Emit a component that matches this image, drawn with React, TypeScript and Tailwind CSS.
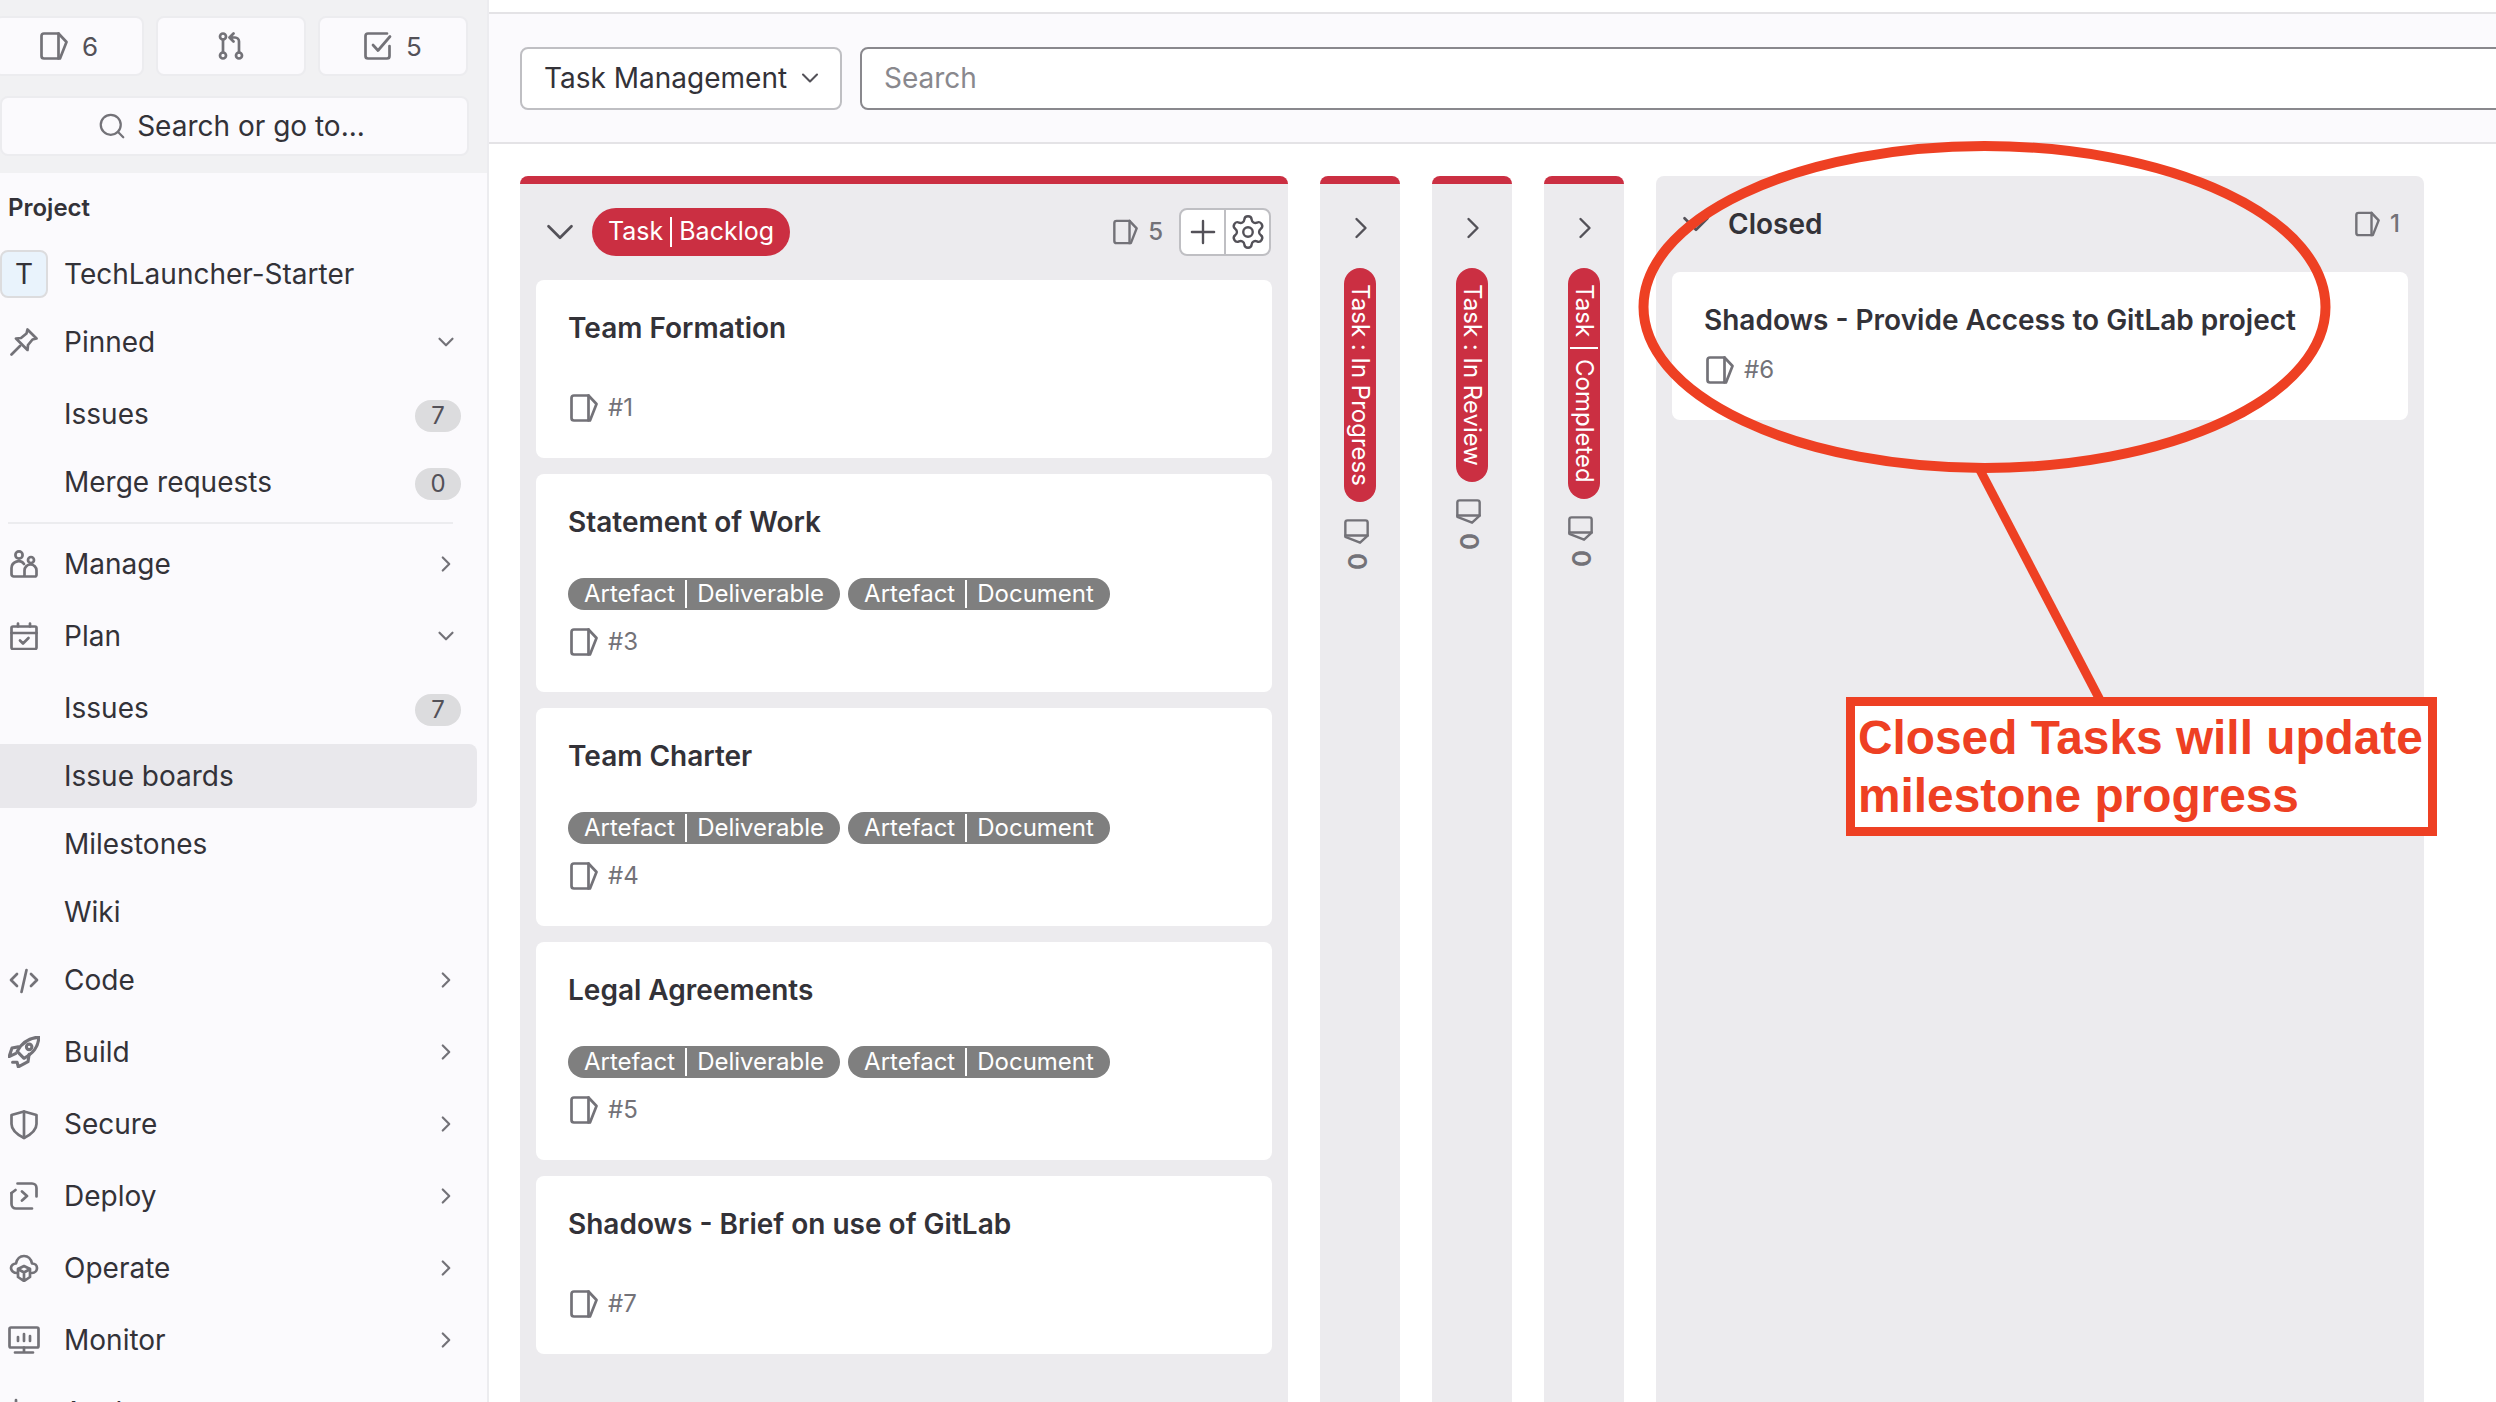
import React from "react";
import { ChevronDown, ChevronRight, Plus, Search, Settings } from "lucide-react";

type IconProps = { className?: string };

const Svg: React.FC<React.PropsWithChildren<IconProps>> = ({ className, children }) => (
  <svg
    viewBox="0 0 28 28"
    fill="none"
    stroke="currentColor"
    strokeWidth={2.7}
    strokeLinecap="round"
    strokeLinejoin="round"
    className={className}
  >
    {children}
  </svg>
);

const IssueIcon = ({ className = "w-7 h-7" }: IconProps) => (
  <Svg className={className}>
    <path d="M4 1.5H18.5V26.5H4A2.5 2.5 0 0 1 1.5 24V4A2.5 2.5 0 0 1 4 1.5Z" />
    <path d="M18.5 1.5L26.5 10L20 26.5H18.5" />
  </Svg>
);

const MergeIcon = ({ className }: IconProps) => (
  <Svg className={className}>
    <circle cx="6" cy="4.5" r="3" />
    <circle cx="6" cy="23.5" r="3" />
    <circle cx="22" cy="23.5" r="3" />
    <path d="M6 7.5V20.5M22 20.5V9.5A4 4 0 0 0 18 5.5H13M16.5 1.5L12.5 5.5L16.5 9.5" />
  </Svg>
);

const TodoIcon = ({ className }: IconProps) => (
  <Svg className={className}>
    <path d="M25.5 14V24A2.5 2.5 0 0 1 23 26.5H4A2.5 2.5 0 0 1 1.5 24V4A2.5 2.5 0 0 1 4 1.5H23" />
    <path d="M9 13L14 18.5L26 4.5" />
  </Svg>
);

const PinIcon = ({ className }: IconProps) => (
  <Svg className={className}>
    <path d="M1.5 26.5L10 18" />
    <path d="M17.5 1.5L26.5 10.5L22.5 11.5L18 17L17.5 22L6 10.5L11 10L16.5 5.5Z" />
  </Svg>
);

const UsersIcon = ({ className }: IconProps) => (
  <Svg className={className}>
    <circle cx="9" cy="5" r="3.6" />
    <circle cx="21" cy="10" r="3" />
    <path d="M1.5 24V18A7 7 0 0 1 14 14M3.5 26.5H13A1.5 1.5 0 0 0 14.5 25V20.5A6 6 0 0 1 26.5 20.5V25A1.5 1.5 0 0 1 25 26.5H15M1.5 24A2.5 2.5 0 0 0 3.5 26.5" />
  </Svg>
);

const PlanIcon = ({ className }: IconProps) => (
  <Svg className={className}>
    <rect x="1.5" y="4.5" width="25" height="22.5" rx="1.5" />
    <path d="M1.5 11H26.5M8 1.5V4.5M20 1.5V4.5M10 18.5L13 21.5L18.5 16" />
  </Svg>
);

const CodeIcon = ({ className }: IconProps) => (
  <Svg className={className}>
    <path d="M7 8L1 14L7 20M21 8L27 14L21 20M16.5 4L11.5 26" />
  </Svg>
);

const RocketIcon = ({ className }: IconProps) => (
  <Svg className={className}>
    <path d="M27 1C18 1.5 12 6 8 13.5L14 19.5C22 15 26.5 10 27 1Z" />
    <circle cx="18.5" cy="9.5" r="2.4" />
    <path d="M9 9.5L3.5 10.5L1 18L6.5 15.5M18.5 16L17.5 22.5L9 27L8 23L4 23" />
  </Svg>
);

const ShieldIcon = ({ className }: IconProps) => (
  <Svg className={className}>
    <path d="M14 1.5L26.5 5V14C26.5 20 21 24.5 14 28C7 24.5 1.5 20 1.5 14V5Z" />
    <path d="M14 1.5V28" />
  </Svg>
);

const DeployIcon = ({ className }: IconProps) => (
  <Svg className={className}>
    <path d="M7.5 1.5H22A4.5 4.5 0 0 1 26.5 6V14.5" />
    <path d="M1.5 11V22A4.5 4.5 0 0 0 6 26.5H22" />
    <path d="M1.5 11L5.5 8M12 9.5L17 14L12 18.5" />
  </Svg>
);

const CloudIcon = ({ className }: IconProps) => (
  <Svg className={className}>
    <path d="M7 19C3.5 19 1 16.5 1 14C1 11.5 3.5 9.5 6 9.5C7 5 10 2 14 2C18.5 2 21 5 22 9.5C25 9.5 27 11.5 27 14C27 16.5 25 19 22 19" />
    <path d="M14 12L20 15V23L14 27L8 23V15ZM8 15L14 18.5L20 15M14 18.5V27" />
  </Svg>
);

const MonitorIcon = ({ className }: IconProps) => (
  <svg
    viewBox="0 0 32 28"
    fill="none"
    stroke="currentColor"
    strokeWidth={2.7}
    strokeLinecap="round"
    strokeLinejoin="round"
    className={className}
  >
    <rect x="1.5" y="1.5" width="29" height="20" rx="1.5" />
    <path d="M16 21.5V26M7 26.5H25M10 11V15M16 8V15M22 10V15" />
  </svg>
);

const ChartIcon = ({ className }: IconProps) => (
  <Svg className={className}>
    <path d="M6 2V26M14 10V26M22 6V26" />
  </Svg>
);

const SubRow = ({ label, count, active }: { label: string; count?: number; active?: boolean }) => (
  <div className="h-[68px] py-[2px] mr-[10px]">
    <div className={`h-full pl-[64px] pr-[16px] flex items-center rounded-r-lg ${active ? "bg-[#e9e8ec]" : ""}`}>
      <span>{label}</span>
      {count !== undefined && (
        <span className="ml-auto mt-[4px] w-[46px] h-[32px] rounded-full bg-[#dcdcde] text-[#535158] text-[24px] flex items-center justify-center">
          {count}
        </span>
      )}
    </div>
  </div>
);

const NavRow = ({
  icon,
  label,
  open,
}: {
  icon: React.ReactNode;
  label: string;
  open?: boolean;
}) => (
  <div className="h-[72px] mr-[10px] pr-[16px] flex items-center">
    <span className="w-[64px] shrink-0 pl-[10px] flex items-center text-[#737278]">{icon}</span>
    <span>{label}</span>
    <span className="ml-auto mr-[2px] text-[#737278]">
      {open ? <ChevronDown size={26} strokeWidth={2} /> : <ChevronRight size={26} strokeWidth={2} />}
    </span>
  </div>
);

const TopButton = ({ icon, count }: { icon: React.ReactNode; count?: number }) => (
  <div className="w-[150px] h-[60px] shrink-0 rounded-lg bg-[#fbfafd] border-2 border-[#ececef] flex items-center justify-center gap-[14px] text-[#535158] text-[26px]">
    {icon}
    {count !== undefined && <span>{count}</span>}
  </div>
);

const Sidebar = () => (
  <aside className="w-[489px] shrink-0 h-full bg-[#fbfafd] border-r-2 border-[#ececef] text-[28px] text-[#333238] overflow-hidden">
    <div className="h-[173px] bg-[#f1f1f3] pt-[16px] pr-[18px]">
      <div className="flex gap-[12px] -ml-[6px]">
        <TopButton icon={<IssueIcon className="w-7 h-7 text-[#737278]" />} count={6} />
        <TopButton icon={<MergeIcon className="w-7 h-7 text-[#737278]" />} />
        <TopButton icon={<TodoIcon className="w-7 h-7 text-[#737278]" />} count={5} />
      </div>
      <div className="mt-[20px] h-[60px] rounded-lg bg-[#fbfafd] border-2 border-[#ececef] pr-[7px] flex items-center justify-center gap-[10px]">
        <Search size={30} strokeWidth={1.8} className="text-[#737278]" />
        <span>Search or go to...</span>
      </div>
    </div>
    <div className="h-[70px] pl-[8px] flex items-center text-[24px] font-semibold">Project</div>
    <div className="h-[62px] mb-px flex items-center">
      <span className="w-[48px] h-[48px] rounded-lg bg-[#e9f3fc] border-2 border-[#dcdcde] flex items-center justify-center text-[#333238]">
        T
      </span>
      <span className="ml-[16px]">TechLauncher-Starter</span>
    </div>
    <NavRow icon={<PinIcon className="w-7 h-7" />} label="Pinned" open />
    <div className="pt-[2px]">
      <SubRow label="Issues" count={7} />
      <SubRow label="Merge requests" count={0} />
    </div>
    <div className="mt-[6px] mb-[4px] ml-[8px] mr-[34px] h-[2px] bg-[#ececef]" />
    <NavRow icon={<UsersIcon className="w-7 h-7" />} label="Manage" />
    <NavRow icon={<PlanIcon className="w-7 h-7" />} label="Plan" open />
    <div className="pt-[2px] -mb-[2px]">
      <SubRow label="Issues" count={7} />
      <SubRow label="Issue boards" active />
      <SubRow label="Milestones" />
      <SubRow label="Wiki" />
    </div>
    <NavRow icon={<CodeIcon className="w-8 h-7 -ml-[2px]" />} label="Code" />
    <NavRow icon={<RocketIcon className="w-8 h-8 -ml-[2px]" />} label="Build" />
    <NavRow icon={<ShieldIcon className="w-7 h-8" />} label="Secure" />
    <NavRow icon={<DeployIcon className="w-7 h-7" />} label="Deploy" />
    <NavRow icon={<CloudIcon className="w-8 h-7 -ml-[2px]" />} label="Operate" />
    <NavRow icon={<MonitorIcon className="w-8 h-7 -ml-[2px]" />} label="Monitor" />
    <NavRow icon={<ChartIcon className="w-7 h-7" />} label="Analyze" />
  </aside>
);

const Label = ({ scope, name }: { scope: string; name: string }) => (
  <span className="h-[32px] rounded-full bg-[#7f7f7f] text-white text-[24px] px-[16px] flex items-center">
    {scope}
    <span className="w-[2px] h-[28px] bg-white mx-[10px]" />
    {name}
  </span>
);

interface Task {
  title: string;
  id: number;
  labels?: boolean;
}

const backlog: Task[] = [
  { title: "Team Formation", id: 1 },
  { title: "Statement of Work", id: 3, labels: true },
  { title: "Team Charter", id: 4, labels: true },
  { title: "Legal Agreements", id: 5, labels: true },
  { title: "Shadows - Brief on use of GitLab", id: 7 },
];

const IssueId = ({ id, className }: { id: number; className: string }) => (
  <div className={`h-[32px] flex items-center gap-[10px] text-[24px] text-[#737278] ${className}`}>
    <IssueIcon className="w-7 h-7 ml-[2px]" />
    <span>#{id}</span>
  </div>
);

const TaskCard = ({ task }: { task: Task }) => (
  <div className="bg-white rounded-lg px-[32px] pt-[32px] pb-[34px]">
    <div className="h-[32px] leading-[32px] text-[28px] font-semibold text-[#333238]">{task.title}</div>
    {task.labels ? (
      <>
        <div className="mt-[40px] flex gap-[8px]">
          <Label scope="Artefact" name="Deliverable" />
          <Label scope="Artefact" name="Document" />
        </div>
        <IssueId id={task.id} className="mt-[16px]" />
      </>
    ) : (
      <IssueId id={task.id} className="mt-[48px]" />
    )}
  </div>
);

const BacklogList = () => (
  <section className="w-[768px] shrink-0 h-full rounded-t-lg bg-[#ecebee] border-t-8 border-[#cb2f42]">
    <header className="h-[48px] mt-[24px] mb-[24px] pl-[27px] pr-[17px] flex items-center">
      <ChevronDown size={46} strokeWidth={1.4} className="text-[#535158] -mx-[10px] shrink-0" />
      <span className="ml-[19px] h-[48px] px-[16px] rounded-full bg-[#cb2f42] text-white text-[25px] flex items-center">
        Task
        <span className="w-[2px] h-[30px] bg-white mx-[7px]" />
        Backlog
      </span>
      <span className="ml-auto flex items-center gap-[10px] text-[24px] font-medium text-[#737278]">
        <IssueIcon className="w-[25px] h-[26px]" />5
      </span>
      <div className="ml-[16px] w-[92px] h-[48px] rounded-lg border-2 border-[#bfbfc3] bg-white flex text-[#535158]">
        <span className="flex-1 flex items-center justify-center">
          <Plus size={38} strokeWidth={1.5} />
        </span>
        <span className="w-[2px] bg-[#bfbfc3]" />
        <span className="flex-1 flex items-center justify-center">
          <Settings size={38} strokeWidth={1.5} />
        </span>
      </div>
    </header>
    <div className="px-[16px] flex flex-col gap-[16px]">
      {backlog.map(task => (
        <TaskCard key={task.id} task={task} />
      ))}
    </div>
  </section>
);

// px/mx are logical in Tailwind 4, so inside vertical-rl they act along the column
const CollapsedList = ({ scope, name, sep }: { scope: string; name: string; sep?: boolean }) => (
  <section className="w-[80px] shrink-0 h-full rounded-t-lg bg-[#ecebee] border-t-8 border-[#cb2f42] flex flex-col items-center">
    <ChevronRight size={36} strokeWidth={1.6} className="mt-[26px] ml-[2px] text-[#535158]" />
    <span className="mt-[22px] w-[32px] px-[16px] rounded-full bg-[#cb2f42] text-white text-[24px] leading-[32px] whitespace-nowrap [writing-mode:vertical-rl]">
      {sep ? (
        <span className="flex items-center">
          {scope}
          <span className="w-[28px] h-[2px] bg-white mx-[10px]" />
          {name}
        </span>
      ) : (
        <span>
          {scope} : {name}
        </span>
      )}
    </span>
    <IssueIcon className="mt-[17px] -ml-[8px] w-[25px] h-[25px] rotate-90 text-[#737278]" />
    <span className="mt-[9px] -ml-[7px] text-[26px] leading-[24px] font-semibold text-[#737278] [writing-mode:vertical-rl]">
      0
    </span>
  </section>
);

const ClosedList = () => (
  <section className="w-[768px] shrink-0 h-full rounded-t-lg bg-[#ecebee]">
    <header className="h-[48px] pt-[24px] box-content mb-[24px] pl-[27px] pr-[24px] flex items-center">
      <ChevronDown size={46} strokeWidth={1.4} className="text-[#535158] -mx-[10px] shrink-0" />
      <span className="ml-[19px] text-[28px] font-semibold text-[#333238]">Closed</span>
      <span className="ml-auto flex items-center gap-[10px] text-[24px] font-medium text-[#737278]">
        <IssueIcon className="w-[25px] h-[26px]" />1
      </span>
    </header>
    <div className="mx-[16px] bg-white rounded-lg px-[32px] pt-[32px] pb-[34px]">
      <div className="h-[32px] leading-[32px] text-[28px] font-semibold text-[#333238]">
        Shadows - Provide Access to GitLab project
      </div>
      <IssueId id={6} className="mt-[18px]" />
    </div>
  </section>
);

const Annotation = () => (
  <>
    <svg className="absolute left-0 top-0 w-[2496px] h-[1402px] pointer-events-none" viewBox="0 0 2496 1402" fill="none">
      <ellipse cx="1984.5" cy="307" rx="341" ry="161" stroke="#ee4023" strokeWidth="10" />
      <line x1="1980" y1="470" x2="2100" y2="700" stroke="#ee4023" strokeWidth="9" />
    </svg>
    <div className="absolute left-[1846px] top-[697px] w-[591px] h-[139px] border-[9px] border-[#ee4023] bg-white pl-[3px] pt-[3px] font-['Liberation_Sans',Arial,sans-serif] font-bold text-[47.8px] leading-[58px] text-[#ee4023] whitespace-nowrap">
      Closed Tasks will update
      <br />
      milestone progress
    </div>
  </>
);

export default function App() {
  return (
    <div className="relative w-[2496px] h-[1402px] overflow-hidden flex bg-white font-['Inter',sans-serif]">
      <Sidebar />
      <main className="flex-1 min-w-0 h-full overflow-hidden">
        <div className="mt-[12px] h-[132px] border-y-2 border-[#e4e3e6] bg-[#fbfafd] pl-[31px] -mr-4 flex items-center gap-[18px]">
          <div className="w-[322px] h-[63px] rounded-lg border-2 border-[#bfbfc3] bg-white pl-[22px] pr-[16px] flex items-center justify-between text-[28px] text-[#333238]">
            <span>Task Management</span>
            <ChevronDown size={28} strokeWidth={1.8} className="text-[#535158]" />
          </div>
          <div className="flex-1 h-[63px] rounded-lg border-2 border-[#89888d] bg-white pl-[22px] flex items-center text-[28px] text-[#89888d]">
            Search
          </div>
        </div>
        <div className="pt-[32px] pl-[31px] flex gap-[32px] h-[1258px]">
          <BacklogList />
          <CollapsedList scope="Task" name="In Progress" />
          <CollapsedList scope="Task" name="In Review" />
          <CollapsedList scope="Task" name="Completed" sep />
          <ClosedList />
        </div>
      </main>
      <Annotation />
    </div>
  );
}
